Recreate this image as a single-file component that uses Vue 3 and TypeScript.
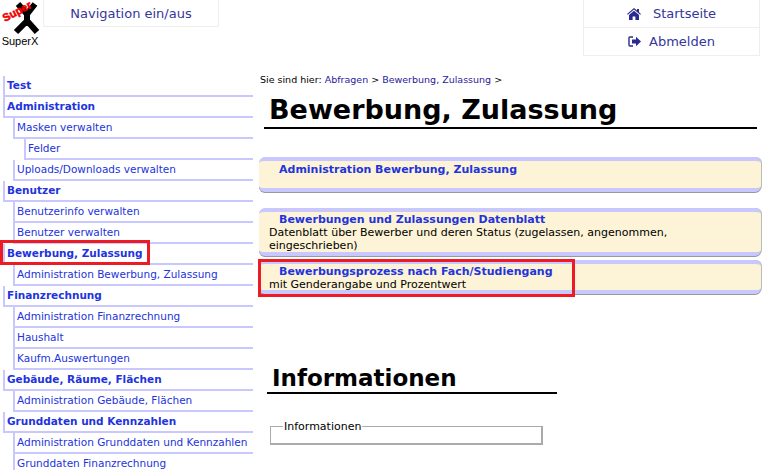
<template>
  <div class="page">
    <header class="top">
      <div class="logo">
        <svg width="40" height="34" viewBox="0 0 40 34">
          <path class="logo-x" d="M18 3 L27 13 L35 3 M27 14 V20 M16 31 L25 22 L29 22 L37 31" />
          <text class="logo-red" x="5" y="21" transform="rotate(-28 5 21)">Super</text>
        </svg>
        <span>SuperX</span>
      </div>
      <a class="nav-toggle">Navigation ein/aus</a>
      <div class="top-right">
        <a class="top-link">
          <svg class="house" width="14" height="12" viewBox="0 0 14 12">
            <path d="M7 0 L10 2.6 V1 H12 V4.3 L14 6 L13.2 6.8 L7 1.6 L.8 6.8 L0 6 Z M2 7 L7 2.8 L12 7 V12 H8.4 V8.4 H5.6 V12 H2 Z" />
          </svg>
          <span class="start-label">Startseite</span>
        </a>
        <a class="top-link">
          <svg class="logout" width="13" height="11" viewBox="0 0 13 11">
            <path d="M5 1 H2 Q1 1 1 2 V9 Q1 10 2 10 H5" fill="none" stroke="#2b2b8f" stroke-width="1.4" />
            <path d="M4 3.5 H8 V.7 L13 5.5 L8 10.3 V7.5 H4 Z" />
          </svg>
          <span>Abmelden</span>
        </a>
      </div>
    </header>

    <div class="content">
      <nav class="sidebar">
        <a
          v-for="item in menu"
          :key="item.label"
          class="menu-item"
          :class="'level-' + item.level"
        >
          <span :class="{ marked: item.marked }">{{ item.label }}</span>
        </a>
      </nav>

      <main class="main">
        <div class="crumbs">
          Sie sind hier: <a>Abfragen</a><i>&gt;</i><a>Bewerbung, Zulassung</a><i>&gt;</i>
        </div>
        <h1>Bewerbung, Zulassung</h1>

        <div class="cards">
          <div v-for="card in cards" :key="card.title" class="card" :class="card.cls">
            <b>{{ card.title }}</b>
            <p v-if="card.text">{{ card.text }}</p>
            <div v-if="card.marked" class="card-mark"></div>
          </div>
        </div>

        <h2>Informationen</h2>
        <fieldset>
          <legend>Informationen</legend>
        </fieldset>
      </main>
    </div>
  </div>
</template>

<script setup lang="ts">
interface MenuItem {
  label: string
  level: number
  marked?: boolean
}

const menu: MenuItem[] = [
  { label: 'Test', level: 0 },
  { label: 'Administration', level: 0 },
  { label: 'Masken verwalten', level: 1 },
  { label: 'Felder', level: 2 },
  { label: 'Uploads/Downloads verwalten', level: 1 },
  { label: 'Benutzer', level: 0 },
  { label: 'Benutzerinfo verwalten', level: 1 },
  { label: 'Benutzer verwalten', level: 1 },
  { label: 'Bewerbung, Zulassung', level: 0, marked: true },
  { label: 'Administration Bewerbung, Zulassung', level: 1 },
  { label: 'Finanzrechnung', level: 0 },
  { label: 'Administration Finanzrechnung', level: 1 },
  { label: 'Haushalt', level: 1 },
  { label: 'Kaufm.Auswertungen', level: 1 },
  { label: 'Gebäude, Räume, Flächen', level: 0 },
  { label: 'Administration Gebäude, Flächen', level: 1 },
  { label: 'Grunddaten und Kennzahlen', level: 0 },
  { label: 'Administration Grunddaten und Kennzahlen', level: 1 },
  { label: 'Grunddaten Finanzrechnung', level: 1 },
]

const cards = [
  { title: 'Administration Bewerbung, Zulassung', text: '', cls: 'first', marked: false },
  {
    title: 'Bewerbungen und Zulassungen Datenblatt',
    text: 'Datenblatt über Bewerber und deren Status (zugelassen, angenommen, eingeschrieben)',
    cls: 'second',
    marked: false,
  },
  {
    title: 'Bewerbungsprozess nach Fach/Studiengang',
    text: 'mit Genderangabe und Prozentwert',
    cls: 'third',
    marked: true,
  },
]
</script>

<style scoped>
.page {
  width: 764px;
  height: 470px;
  overflow: hidden;
  background: #fff;
  font-family: "DejaVu Sans", Verdana, sans-serif;
  color: #000;
}

.top {
  display: flex;
  height: 56px;
  align-items: flex-start;
}

.logo {
  width: 40px;
  margin-right: 3px;
  display: flex;
  flex-direction: column;
  align-items: center;
  font-family: "Liberation Sans", sans-serif;
  font-size: 11px;
  line-height: 13px;
  padding-top: 1px;
}

.logo svg {
  display: block;
}

.logo-x {
  fill: none;
  stroke: #000;
  stroke-width: 6;
}

.logo-red {
  fill: #f00000;
  stroke: #f00000;
  stroke-width: 0.5;
  font-family: "Liberation Sans", sans-serif;
  font-size: 11px;
  font-weight: bold;
}

.nav-toggle {
  width: 176px;
  height: 27px;
  box-sizing: border-box;
  border: 1px solid #eee;
  border-top: 0;
  text-align: center;
  font-size: 13px;
  line-height: 27px;
  color: #36369b;
}

.top-right {
  margin-left: auto;
  margin-right: 4px;
  width: 177px;
  border: 1px solid #eee;
  border-top: 0;
  box-sizing: border-box;
}

.top-link {
  display: flex;
  justify-content: center;
  align-items: center;
  gap: 8px;
  height: 27px;
  font-size: 13px;
  color: #36369b;
}

.top-link + .top-link {
  border-top: 1px solid #eee;
}

.house,
.logout {
  fill: #2b2b8f;
}

.start-label {
  margin-left: 4px;
}

.content {
  display: flex;
  align-items: flex-start;
}

.sidebar {
  width: 250px;
  margin: 20px 0 0 3px;
  flex: none;
}

.menu-item {
  display: block;
  height: 21px;
  box-sizing: border-box;
  padding: 2px 0 0 2px;
  border-left: 2px solid #c8c8ff;
  border-bottom: 2px solid #c8c8ff;
  font-size: 10.5px;
  line-height: 15px;
  color: #2233dd;
  white-space: nowrap;
}

.level-0 {
  font-weight: bold;
}

.level-1 {
  margin-left: 10px;
}

.level-2 {
  margin-left: 21px;
}

.marked {
  position: relative;
}

.marked::after {
  content: "";
  position: absolute;
  left: -7px;
  right: -7px;
  top: -7px;
  bottom: -6px;
  border: 3px solid #ed1c24;
}

.main {
  flex: 1;
  margin: 17px 0 0 6px;
  min-width: 0;
}

.crumbs {
  font-size: 9.5px;
  line-height: 14px;
  margin-left: 1px;
}

.crumbs a {
  color: #2a1a9c;
}

.crumbs i {
  font-style: normal;
  margin: 0 3px;
}

h1 {
  margin: 6px 7px 0 5px;
  padding: 0 0 0 5px;
  height: 34px;
  border-bottom: 2px solid #000;
  font-size: 27px;
  line-height: 34px;
}

.cards {
  margin-top: 28px;
  margin-right: 3px;
}

.card {
  position: relative;
  box-sizing: border-box;
  background: #fdf3d6;
  border-top: 4px solid #c8c8ff;
  border-bottom: 4px solid #c8c8ff;
  box-shadow: 0 1px 0 #999, 1px 0 0 #bbb;
  border-radius: 6px;
  padding: 0 6px 0 10px;
  font-size: 11px;
  line-height: 13px;
}

.card b {
  display: block;
  padding-left: 10px;
  color: #2233dd;
}

.card p {
  margin: 0;
}

.first {
  height: 35px;
  padding-top: 2px;
  margin-bottom: 16px;
}

.second {
  height: 48px;
  margin-bottom: 4px;
  padding-top: 1px;
}

.third {
  height: 34px;
  padding-top: 1px;
}

.card-mark {
  position: absolute;
  left: -1px;
  top: -5px;
  width: 317px;
  height: 38px;
  border: 3px solid #ed1c24;
  box-sizing: border-box;
}

h2 {
  margin: 70px 0 0 8px;
  width: 290px;
  padding-left: 5px;
  border-bottom: 2px solid #000;
  font-size: 23px;
  line-height: 28px;
  box-sizing: border-box;
}

fieldset {
  margin: 26px 0 0 11px;
  padding: 0 0 0 12px;
  width: 273px;
  height: 25px;
  box-sizing: border-box;
  border: 1px solid #aaa;
  border-width: 1px 2px 2px 1px;
}

legend {
  padding: 0 1px;
  font-size: 11px;
  line-height: 13px;
}
</style>

<style>
html,
body {
  margin: 0;
  overflow: hidden;
}
</style>
